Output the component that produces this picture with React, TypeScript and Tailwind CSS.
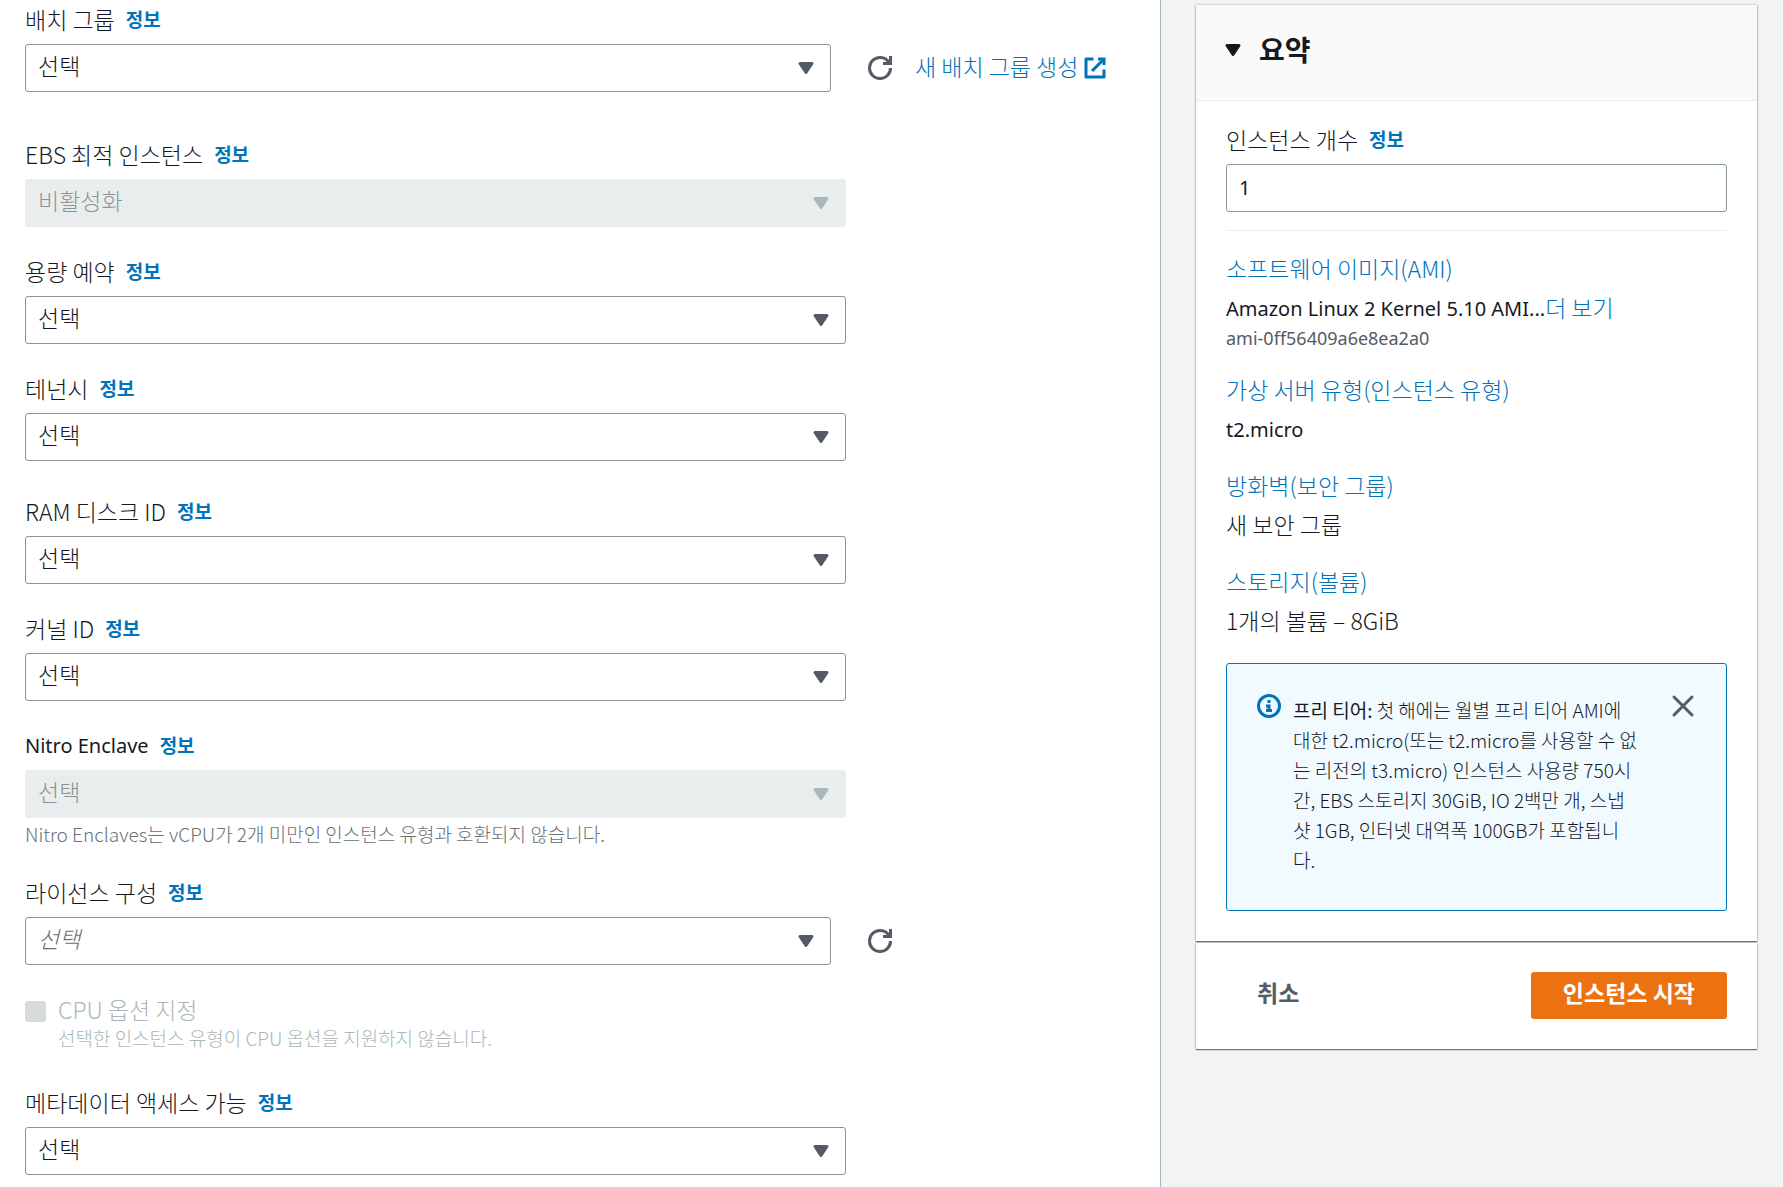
import { useId, type ReactNode } from 'react';

// icons
function CaretDownIcon({ className = '' }: { className?: string }) {
    return (
        <svg viewBox="0 0 16 16" className={`h-6 w-6 ${className}`} aria-hidden="true">
            <path d="M4 5h8l-4 6-4-6z" fill="currentColor" stroke="currentColor" strokeWidth="2" strokeLinejoin="round" />
        </svg>
    );
}

function RefreshIcon() {
    return (
        <svg viewBox="0 0 16 16" className="h-6 w-6" fill="none" stroke="currentColor" strokeWidth="2" aria-hidden="true">
            <path d="M10 5h5V0" />
            <path d="M15 8a6.957 6.957 0 0 1-7 7 6.957 6.957 0 0 1-7-7 6.957 6.957 0 0 1 7-7 6.87 6.87 0 0 1 6.3 4" />
        </svg>
    );
}

function ExternalIcon() {
    return (
        <svg viewBox="0 0 16 16" className="h-6 w-6" fill="none" stroke="currentColor" strokeWidth="2" aria-hidden="true">
            <path d="M10 2h4v4" />
            <path d="M6 10l8-8" />
            <path d="M14 9.048V14H2V2h5" strokeLinejoin="round" />
        </svg>
    );
}

function InfoIcon() {
    return (
        <svg viewBox="0 0 16 16" className="h-6 w-6" fill="none" stroke="currentColor" strokeWidth="2" aria-hidden="true">
            <circle cx="8" cy="8" r="7" />
            <path d="M8 11V8H6" />
            <path d="M10 11H6" />
            <path d="M8 6V4" />
        </svg>
    );
}

function CloseIcon() {
    return (
        <svg viewBox="0 0 16 16" className="h-6 w-6" fill="none" stroke="currentColor" strokeWidth="2" aria-hidden="true">
            <path d="M2 2l12 12M14 2L2 14" strokeLinecap="round" />
        </svg>
    );
}

// local components
function InfoLink() {
    return (
        <a href="#info" className="ml-[11px] text-[19px] font-bold text-[#0073bb]">
            정보
        </a>
    );
}

type SelectFieldProps = {
    label: string;
    labelClassName?: string;
    value?: string;
    disabled?: boolean;
    placeholder?: boolean;
    hint?: string;
    actions?: ReactNode;
    className?: string;
};

function SelectField({
    label,
    labelClassName = '',
    value = '선택',
    disabled,
    placeholder,
    hint,
    actions,
    className = '',
}: SelectFieldProps) {
    const id = useId();
    const tone = disabled
        ? 'border-[#eaeded] bg-[#eaeded] text-[#879596]'
        : placeholder
          ? 'border-[#879596] bg-white text-[#687078] italic'
          : 'border-[#879596] bg-white text-[#16191f]';

    return (
        <div className={className}>
            <div className="mb-3 flex h-[26px] items-center">
                <label htmlFor={id} className={labelClassName}>
                    {label}
                </label>
                <InfoLink />
            </div>
            <div className="flex items-center">
                <div className={`relative w-full ${actions ? 'max-w-[806px]' : 'max-w-[821px]'}`}>
                    <select
                        id={id}
                        disabled={disabled}
                        className={`block h-12 w-full appearance-none rounded-[3px] border px-3 pb-1.5 opacity-100 ${tone}`}
                    >
                        <option>{value}</option>
                    </select>
                    <CaretDownIcon
                        className={`pointer-events-none absolute top-3 right-[13px] ${disabled ? 'text-[#aab7b8]' : 'text-[#545b64]'}`}
                    />
                </div>
                {actions}
            </div>
            {hint && <p className="mt-1 pb-0.5 text-[19px] leading-6 text-[#687078]">{hint}</p>}
        </div>
    );
}

function RefreshButton() {
    return (
        <button type="button" aria-label="새로 고침" className="ml-[37px] shrink-0 text-[#545b64]">
            <RefreshIcon />
        </button>
    );
}

function SummaryItem({ title, children }: { title: string; children: ReactNode }) {
    return (
        <div>
            <dt className="mb-[9px] leading-[30px]">
                <a href="#section" className="text-[#0073bb]">
                    {title}
                </a>
            </dt>
            <dd className="leading-[30px]">{children}</dd>
        </div>
    );
}

function AdvancedDetails() {
    return (
        <main className="min-w-0 flex-1 px-[25px] pt-1.5 pb-3">
            <SelectField
                label="배치 그룹"
                actions={
                    <>
                        <RefreshButton />
                        <a href="#placement" className="ml-[23px] flex shrink-0 items-center gap-[5px] text-[#0073bb]">
                            <span className="pb-1">새 배치 그룹 생성</span>
                            <ExternalIcon />
                        </a>
                    </>
                }
            />
            <SelectField label="EBS 최적 인스턴스" value="비활성화" disabled className="mt-[49px]" />
            <SelectField label="용량 예약" className="mt-[31px]" />
            <SelectField label="테넌시" className="mt-[31px]" />
            <SelectField label="RAM 디스크 ID" className="mt-[37px]" />
            <SelectField label="커널 ID" className="mt-[31px]" />
            <SelectField
                label="Nitro Enclave"
                labelClassName="pt-0.5 font-['Noto_Sans',sans-serif] text-[20px] font-normal"
                disabled
                hint="Nitro Enclaves는 vCPU가 2개 미만인 인스턴스 유형과 호환되지 않습니다."
                className="mt-[31px]"
            />
            <SelectField label="라이선스 구성" placeholder actions={<RefreshButton />} className="mt-[31px]" />
            <div className="mt-[30px] flex gap-3 pb-px text-[#aab7b8]">
                <input
                    id="cpu-options"
                    type="checkbox"
                    disabled
                    className="mt-1.5 h-[21px] w-[21px] shrink-0 appearance-none rounded-[3px] bg-[#d5dbdb]"
                />
                <label htmlFor="cpu-options">
                    <span className="block leading-7">CPU 옵션 지정</span>
                    <span className="mt-[3px] block text-[19px] leading-6">
                        선택한 인스턴스 유형이 CPU 옵션을 지원하지 않습니다.
                    </span>
                </label>
            </div>
            <SelectField label="메타데이터 액세스 가능" className="mt-[38px]" />
        </main>
    );
}

function FreeTierAlert() {
    return (
        <div className="mt-[28px] flex items-start rounded-[3px] border border-[#0073bb] bg-[#f1faff] pt-[30px] pr-[31px] pb-[35px] pl-[30px]">
            <span className="shrink-0 text-[#0073bb]">
                <InfoIcon />
            </span>
            <p className="ml-3 min-w-0 flex-1 pt-px text-[19px] leading-[30px]">
                <strong>프리 티어:</strong> 첫 해에는 월별 프리 티어 AMI에 대한 t2.micro(또는 t2.micro를 사용할 수 없는
                리전의 t3.micro) 인스턴스 사용량 750시간, EBS 스토리지 30GiB, IO 2백만 개, 스냅샷 1GB, 인터넷 대역폭
                100GB가 포함됩니다.
            </p>
            <button type="button" aria-label="닫기" className="ml-[30px] shrink-0 text-[#545b64]">
                <CloseIcon />
            </button>
        </div>
    );
}

function Summary() {
    return (
        <aside className="w-[623px] shrink-0 border-l border-[#aab7b8] bg-[#f2f3f3] pt-[5px] pr-[26px] pl-[35px]">
            <section className="bg-white shadow-[0_1px_1px_0_rgba(0,28,36,0.5),0_0_2px_0_rgba(0,28,36,0.4)]">
                <h2 className="border-b border-[#eaeded] bg-[#fafafa] pt-6 pb-[29px] pl-[25px] text-[28px] leading-[42px] font-bold">
                    <button type="button" className="flex h-[42px] items-center gap-3.5">
                        <CaretDownIcon />
                        <span className="pb-0.5">요약</span>
                    </button>
                </h2>
                <div className="px-[30px] pt-[25px] pb-[30px]">
                    <div className="mb-3 flex h-[26px] items-center">
                        <label htmlFor="instance-count">인스턴스 개수</label>
                        <InfoLink />
                    </div>
                    <input
                        id="instance-count"
                        type="text"
                        defaultValue="1"
                        className="block h-12 w-full rounded-[3px] border border-[#879596] px-3 pb-0.5 font-['Noto_Sans',sans-serif] text-[20px] font-normal"
                    />
                    <dl className="mt-[18px] flex flex-col gap-[27px] border-t border-[#eaeded] pt-[22px]">
                        <SummaryItem title="소프트웨어 이미지(AMI)">
                            <div className="flex h-[30px] items-center">
                                <span className="pt-1 font-['Noto_Sans',sans-serif] text-[20px] font-normal">
                                    Amazon Linux 2 Kernel 5.10 AMI...
                                </span>
                                <a href="#more" className="text-[#0073bb]">
                                    더 보기
                                </a>
                            </div>
                            <small className="block pt-2 font-['Noto_Sans',sans-serif] text-[18px] leading-[17px] font-normal text-[#545b64]">
                                ami-0ff56409a6e8ea2a0
                            </small>
                        </SummaryItem>
                        <SummaryItem title="가상 서버 유형(인스턴스 유형)">
                            <div className="flex h-[30px] items-center pt-1 font-['Noto_Sans',sans-serif] text-[20px] font-normal">
                                t2.micro
                            </div>
                        </SummaryItem>
                        <SummaryItem title="방화벽(보안 그룹)">새 보안 그룹</SummaryItem>
                        <SummaryItem title="스토리지(볼륨)">1개의 볼륨 – 8GiB</SummaryItem>
                    </dl>
                    <FreeTierAlert />
                </div>
            </section>
            <footer className="mt-0.5 flex items-center justify-between bg-white pt-[29px] pr-[30px] pb-[30px] pl-[61px] shadow-[0_1px_1px_0_rgba(0,28,36,0.5),0_0_2px_0_rgba(0,28,36,0.4)]">
                <button type="button" className="pb-1.5 font-bold text-[#545b64]">
                    취소
                </button>
                <button
                    type="button"
                    className="h-[47px] rounded-[3px] bg-[#ec7211] px-8 pb-1.5 font-bold text-white"
                >
                    인스턴스 시작
                </button>
            </footer>
        </aside>
    );
}

export default function App() {
    return (
        <div className="flex min-h-screen bg-white font-['Noto_Sans_CJK_KR',sans-serif] text-[23px] font-light text-[#16191f]">
            <AdvancedDetails />
            <Summary />
        </div>
    );
}
